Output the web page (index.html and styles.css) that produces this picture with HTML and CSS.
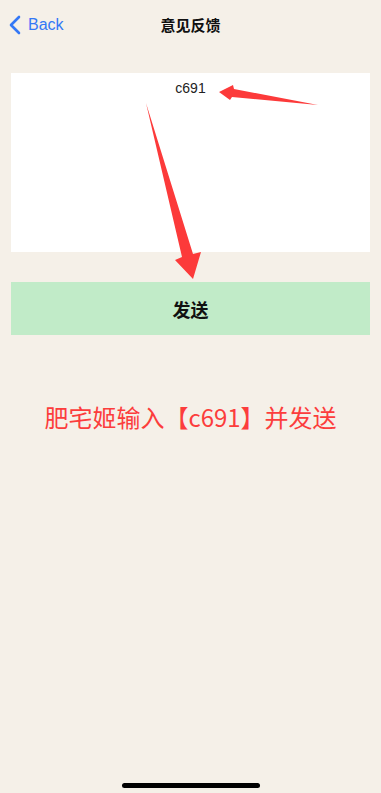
FILE: index.html
```html
<!DOCTYPE html>
<html lang="zh">
<head>
  <meta charset="UTF-8" />
  <meta name="viewport" content="width=device-width, initial-scale=1.0" />
  <title>意见反馈</title>
  <link rel="stylesheet" href="styles.css">
</head>
<body>
  <div class="page">
    <header class="nav">
      <a class="back" href="#">
        <svg class="back-icon" width="12" height="20" viewBox="0 0 12 20">
          <path d="M10 2 L2 10 L10 18" fill="none" stroke="#3478f6" stroke-width="2.6" stroke-linecap="round" stroke-linejoin="round" />
        </svg>
        <span>Back</span>
      </a>
      <h1 class="nav-title">意见反馈</h1>
    </header>

    <div class="content">
      <div class="feedback-box">
        <p class="feedback-text">c691</p>
      </div>
      <button class="send-btn">发送</button>
      <p class="hint">肥宅姬输入【c691】并发送</p>
    </div>

    <!-- arrows drawn over the page -->
    <svg class="arrows" width="381" height="300" viewBox="0 0 381 300">
      <polygon points="219,92 233,85 234,89 318,105 232,97 230,100" fill="#fc3a3a" />
      <polygon points="146,103 193,254 201,252 193,279 175,260 182,257" fill="#fc3a3a" />
    </svg>

    <div class="home-bar"></div>
  </div>
</body>
</html>
```

FILE: styles.css
```css
body {
  margin: 0;
  padding: 0;
  background-color: #f5f0e8;
  font-family: "Noto Sans CJK SC", "Liberation Sans", sans-serif;
}
.page {
  position: relative;
  width: 381px;
  height: 793px;
  overflow: hidden;
}
.nav {
  position: relative;
  height: 48px;
  display: flex;
  align-items: center;
  justify-content: center;
}
.back {
  position: absolute;
  left: 9px;
  top: 15px;
  display: flex;
  align-items: center;
  gap: 7px;
  color: #3478f6;
  text-decoration: none;
  font-family: "Liberation Sans", sans-serif;
  font-size: 16px;
}
.nav-title {
  margin: 0;
  font-size: 15px;
  font-weight: bold;
  color: #111;
}
.content {
  padding: 25px 11px 0;
}
.feedback-box {
  height: 179px;
  background-color: #ffffff;
}
.feedback-text {
  margin: 0;
  padding-top: 7px;
  text-align: center;
  font-family: "Liberation Sans", sans-serif;
  font-size: 14px;
  color: #222;
}
.send-btn {
  display: block;
  width: 100%;
  height: 53px;
  margin-top: 30px;
  border: none;
  background-color: #c1ebc8;
  font-family: "Noto Sans CJK SC", sans-serif;
  font-size: 18px;
  font-weight: bold;
  color: #111;
}
.hint {
  margin: 66px 0 0;
  text-align: center;
  font-size: 24px;
  line-height: 32px;
  color: #fc3d3c;
}
.arrows {
  position: absolute;
  left: 0;
  top: 0;
}
.home-bar {
  position: absolute;
  left: 122px;
  bottom: 5px;
  width: 138px;
  height: 5px;
  border-radius: 3px;
  background-color: #000;
}
```
